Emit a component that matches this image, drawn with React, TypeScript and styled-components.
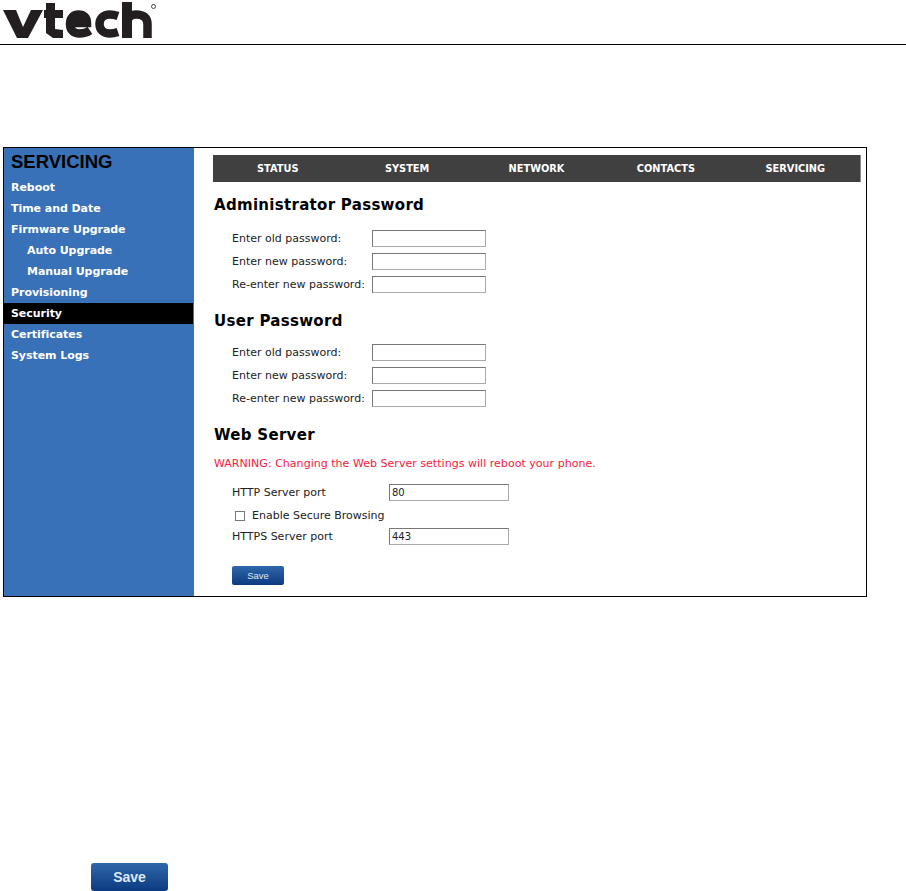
import React from "react";
import styled, { createGlobalStyle } from "styled-components";

const GlobalStyle = createGlobalStyle`
  html, body {
    margin: 0;
    padding: 0;
    background: #fff;
    font-family: "DejaVu Sans", sans-serif;
  }
`;

const menu = [
  { label: "Reboot" },
  { label: "Time and Date" },
  { label: "Firmware Upgrade" },
  { label: "Auto Upgrade", sub: true },
  { label: "Manual Upgrade", sub: true },
  { label: "Provisioning" },
  { label: "Security", active: true },
  { label: "Certificates" },
  { label: "System Logs" },
];

const tabs = ["STATUS", "SYSTEM", "NETWORK", "CONTACTS", "SERVICING"];
const passwordLabels = ["Enter old password:", "Enter new password:", "Re-enter new password:"];

const Logo = () => (
  <svg width="160" height="42" viewBox="0 0 160 42" aria-label="vtech logo">
    <g fill="#231f20">
      <polygon points="3,10 16,10 23,27 31,10 43,10 28,38 17,38" />
      <polygon points="46,3 55,3 55,10 63,10 63,18 55,18 55,29 63,30 63,38 53,38 46,33 46,18 44,18 44,10 46,10" />
      <rect x="122" y="2" width="10" height="36" />
    </g>
    <g fill="none" stroke="#231f20" strokeWidth="8.5">
      <path d="M70 23 H87 C87 17.5 84 14.5 78.5 14.5 C73 14.5 70 18.5 70 24 C70 30 73.5 33.5 79.5 33.5 C83 33.5 87 32.5 90 30.5" />
      <path d="M118 16 C115 15 113 14.5 110 14.5 C103 14.5 99.5 18.5 99.5 24 C99.5 29.5 103 33.5 110 33.5 C113 33.5 115 33 118 32" />
      <path d="M127 24 C127 18 131 14.5 136 14.5 C144 14.5 147.5 18 147.5 24 V38" />
    </g>
    <circle cx="153.5" cy="6.5" r="2" fill="none" stroke="#444" strokeWidth="1" />
  </svg>
);

const PasswordFields = ({ top }: { top: number }) => (
  <Fields $top={top}>
    {passwordLabels.map((label) => (
      <Row key={label}>
        <PasswordLabel>{label}</PasswordLabel>
        <TextBox type="password" />
      </Row>
    ))}
  </Fields>
);

const App = () => (
  <Page>
    <GlobalStyle />
    <Header>
      <Logo />
    </Header>
    <Frame>
      <Sidebar>
        <SideTitle>SERVICING</SideTitle>
        {menu.map((item) => (
          <MenuItem key={item.label} $sub={item.sub} $active={item.active}>
            {item.label}
          </MenuItem>
        ))}
      </Sidebar>
      <Content>
        <TabBar>
          {tabs.map((tab) => (
            <Tab key={tab}>{tab}</Tab>
          ))}
        </TabBar>

        <SectionTitle $top={14}>Administrator Password</SectionTitle>
        <PasswordFields top={16} />

        <SectionTitle $top={19}>User Password</SectionTitle>
        <PasswordFields top={14} />

        <SectionTitle $top={19}>Web Server</SectionTitle>
        <Warning>WARNING: Changing the Web Server settings will reboot your phone.</Warning>
        <PortFields>
          <Row>
            <PortLabel>HTTP Server port</PortLabel>
            <PortBox defaultValue="80" />
          </Row>
          <CheckRow>
            <Check type="checkbox" />
            <Label>Enable Secure Browsing</Label>
          </CheckRow>
          <Row>
            <PortLabel>HTTPS Server port</PortLabel>
            <PortBox defaultValue="443" />
          </Row>
        </PortFields>
        <SmallSave>Save</SmallSave>
      </Content>
    </Frame>
    <BigSave>Save</BigSave>
  </Page>
);

const Page = styled.div`
  width: 906px;
  height: 891px;
  overflow: hidden;
  background: #fff;
`;

const Header = styled.header`
  height: 44px;
  border-bottom: 1px solid #000;
  svg {
    display: block;
  }
`;

const Frame = styled.section`
  display: flex;
  box-sizing: border-box;
  width: 864px;
  height: 450px;
  margin: 102px 0 0 3px;
  border: 1px solid #000;
`;

const Sidebar = styled.nav`
  width: 190px;
  flex: none;
  background: #3871b7;
`;

const SideTitle = styled.div`
  height: 29px;
  padding: 3px 0 0 7px;
  box-sizing: border-box;
  font: bold 18.5px/22px "Liberation Sans", sans-serif;
  color: #000;
`;

const MenuItem = styled.div<{ $sub?: boolean; $active?: boolean }>`
  height: 21px;
  margin-right: 1px;
  padding-left: ${({ $sub }) => ($sub ? "23px" : "7px")};
  font-size: 11px;
  font-weight: bold;
  line-height: 21px;
  letter-spacing: -0.05px;
  color: #fff;
  background: ${({ $active }) => ($active ? "#000" : "transparent")};
`;

const Content = styled.main`
  flex: 1;
  padding: 7px 5px 0 19px;
`;

const TabBar = styled.div`
  display: flex;
  height: 27px;
  background: #404040;
  border-right: 1px solid #8a8a8a;
`;

const Tab = styled.div`
  flex: 1;
  text-align: center;
  font-size: 9.8px;
  font-weight: bold;
  line-height: 27px;
  color: #fff;
`;

const SectionTitle = styled.h2<{ $top: number }>`
  margin: ${({ $top }) => $top}px 0 0 1px;
  font-size: 15px;
  font-weight: bold;
  line-height: 18px;
  letter-spacing: 0.3px;
  color: #000;
`;

const Fields = styled.div<{ $top: number }>`
  display: flex;
  flex-direction: column;
  gap: 6px;
  margin: ${({ $top }) => $top}px 0 0 19px;
`;

const Row = styled.div`
  display: flex;
  align-items: center;
  height: 17px;
`;

const Label = styled.span`
  font-size: 11px;
  line-height: 17px;
  color: #222;
`;

const PasswordLabel = styled(Label)`
  width: 140px;
`;

const PortLabel = styled(Label)`
  width: 157px;
`;

const TextBox = styled.input`
  box-sizing: border-box;
  width: 114px;
  height: 17px;
  margin: 0;
  padding: 0 2px;
  border: 1px solid;
  border-color: #777 #aaa #aaa #777;
  background: #fff;
`;

const PortBox = styled(TextBox)`
  width: 120px;
  font: 10px "DejaVu Sans", sans-serif;
  color: #222;
`;

const Warning = styled.p`
  margin: 13px 0 0 1px;
  font-size: 11px;
  line-height: 14px;
  letter-spacing: 0.03px;
  color: #f5203f;
`;

const PortFields = styled.div`
  display: flex;
  flex-direction: column;
  gap: 5px;
  margin: 13px 0 0 19px;
`;

const CheckRow = styled.div`
  display: flex;
  align-items: center;
  height: 17px;
  padding: 2px 0 0 3px;
  box-sizing: border-box;
  gap: 7px;
`;

const Check = styled.input`
  appearance: none;
  box-sizing: border-box;
  width: 10px;
  height: 10px;
  margin: 0;
  border: 1px solid #777;
  background: #fff;
`;

const SmallSave = styled.button`
  display: block;
  width: 52px;
  height: 19px;
  margin: 21px 0 0 19px;
  padding: 0;
  border: 0;
  border-radius: 2px;
  background: linear-gradient(#2f67ab, #0c3a80);
  color: #dfe8f5;
  font: 9.5px "Liberation Sans", sans-serif;
`;

const BigSave = styled.button`
  display: block;
  width: 77px;
  height: 28px;
  margin: 266px 0 0 91px;
  padding: 0;
  border: 0;
  border-radius: 3px;
  background: linear-gradient(#2f67ab, #0c3a80);
  color: #dfe8f5;
  font: bold 14px "Liberation Sans", sans-serif;
`;

export default App;
